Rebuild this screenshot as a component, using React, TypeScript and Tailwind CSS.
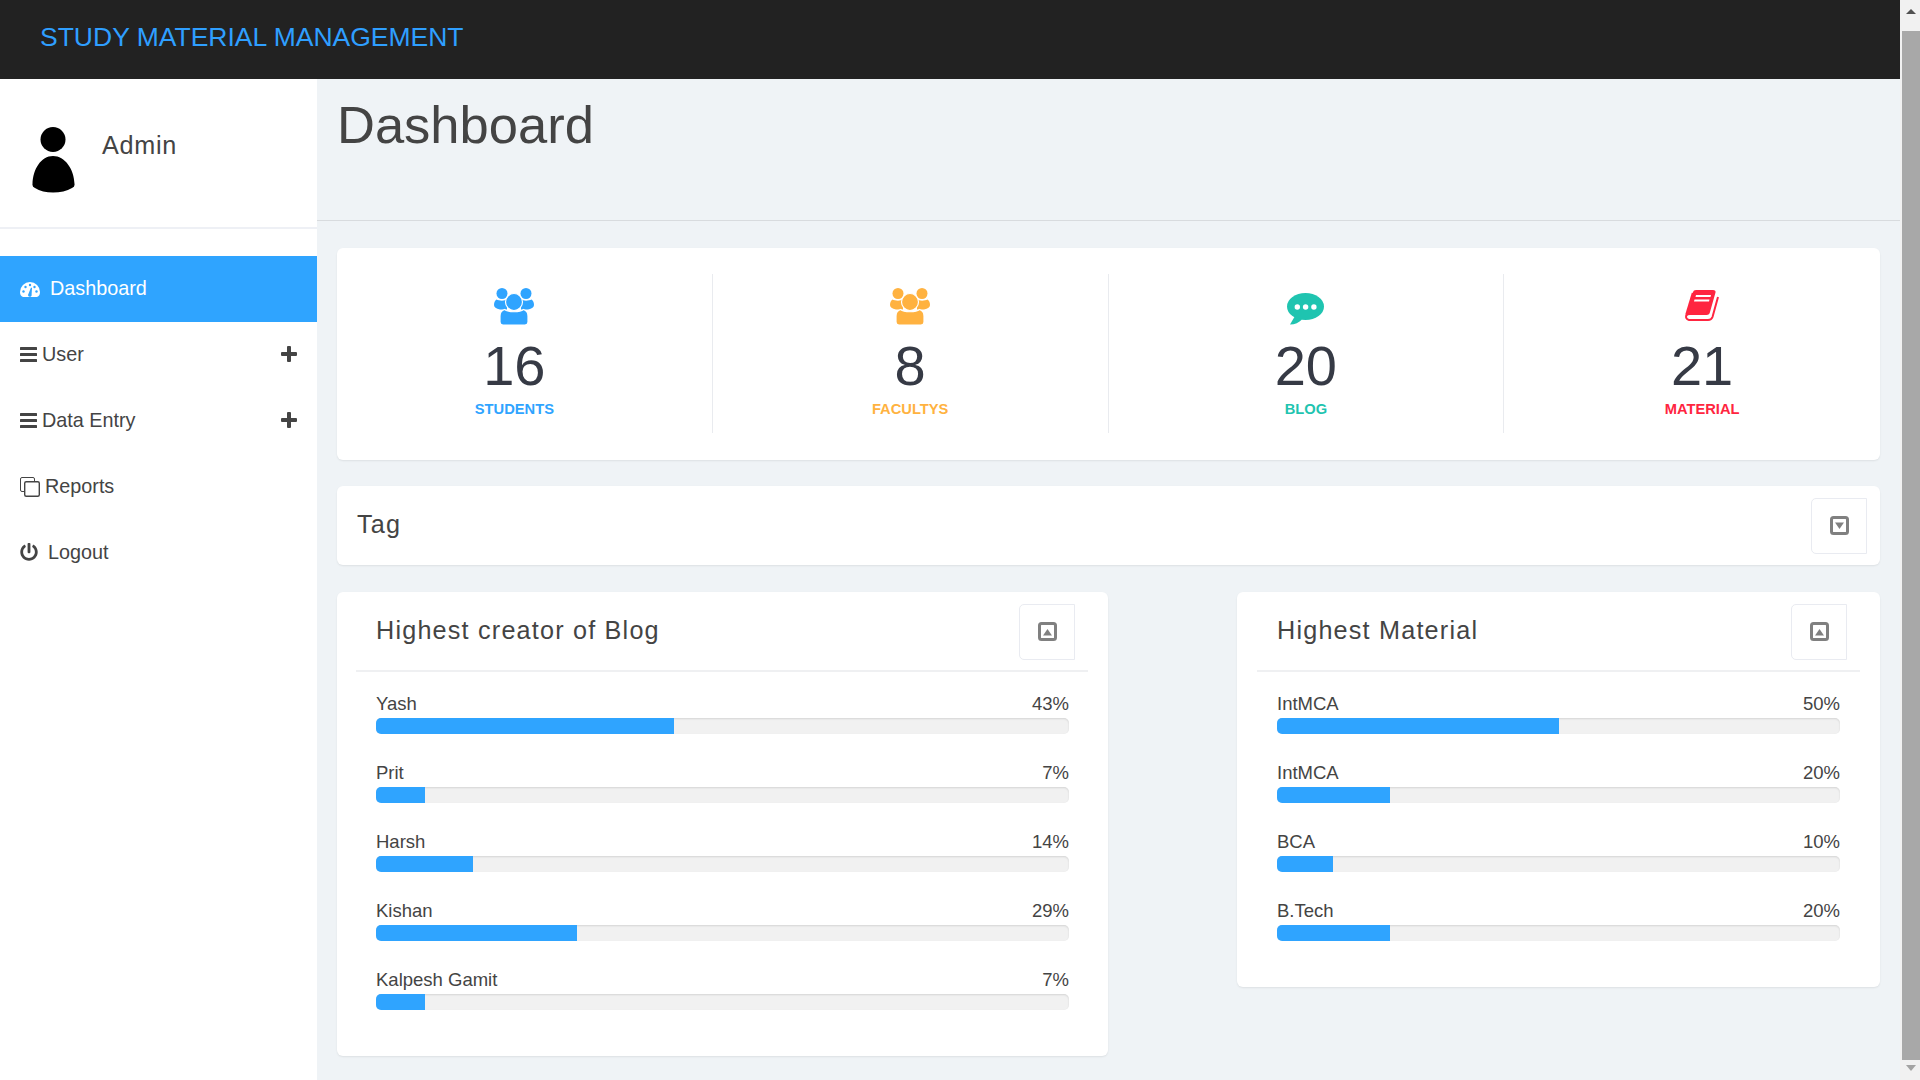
import React from 'react';
import { FaPowerOff } from 'react-icons/fa';

const font = { fontFamily: '"Liberation Sans", Arial, sans-serif' };

const blogRows = [
  { name: 'Yash', value: 43 },
  { name: 'Prit', value: 7 },
  { name: 'Harsh', value: 14 },
  { name: 'Kishan', value: 29 },
  { name: 'Kalpesh Gamit', value: 7 },
];

const materialRows = [
  { name: 'IntMCA', value: 50 },
  { name: 'IntMCA', value: 20 },
  { name: 'BCA', value: 10 },
  { name: 'B.Tech', value: 20 },
];

const PersonIcon = () => (
  <svg width="43" height="66" viewBox="0 0 43 66" className="shrink-0">
    <circle cx="21" cy="12.5" r="12.5" fill="#000" />
    <path d="M21 29C33 29 42 42 42.5 57Q43 60 40 61C30 67 12 67 3 61Q0 60 .5 57C1 42 9 29 21 29Z" fill="#000" />
  </svg>
);

const GaugeIcon = () => (
  <svg width="20" height="15" viewBox="0 0 20 15" className="shrink-0">
    <path d="M3 15Q0 14 0 10A10 10 0 0 1 20 10Q20 14 17 15Z" fill="#fff" />
    <g fill="#2fa4ff">
      <circle cx="3.5" cy="9.5" r="1.2" />
      <circle cx="5.5" cy="5" r="1.2" />
      <circle cx="10" cy="3" r="1.2" />
      <circle cx="14.5" cy="5" r="1.2" />
      <circle cx="16.5" cy="9.5" r="1.2" />
      <path d="M8.4 12L11 5.5L12 6L11.6 12.5A1.8 1.8 0 1 1 8.4 12Z" />
    </g>
  </svg>
);

const BarsIcon = () => (
  <svg width="17" height="15" viewBox="0 0 17 15" className="-mt-[2px] shrink-0">
    <g fill="#444">
      <rect x="0" y="0" width="17" height="3" rx=".5" />
      <rect x="0" y="6" width="17" height="3" rx=".5" />
      <rect x="0" y="12" width="17" height="3" rx=".5" />
    </g>
  </svg>
);

const PlusIcon = () => (
  <svg width="16" height="16" viewBox="0 0 16 16" className="-mt-[3px] shrink-0">
    <path
      d="M6 1Q6 0 7 0H9Q10 0 10 1V6H15Q16 6 16 7V9Q16 10 15 10H10V15Q10 16 9 16H7Q6 16 6 15V10H1Q0 10 0 9V7Q0 6 1 6H6Z"
      fill="#444"
    />
  </svg>
);

const CloneIcon = () => (
  <svg width="20" height="20" viewBox="0 0 20 20" className="shrink-0" fill="none" stroke="#444">
    <path d="M4 14.5H2Q.5 14.5 .5 13V2Q.5 .5 2 .5H13Q14.5 .5 14.5 2V4" strokeWidth="1" />
    <rect x="4.7" y="4.7" width="14.6" height="14.6" rx="1.5" strokeWidth="1.4" />
  </svg>
);

const UsersIcon = ({ color }: { color: string }) => (
  <svg width="40" height="37" viewBox="0 0 40 37">
    <g fill={color}>
      <circle cx="8" cy="5.5" r="5.5" />
      <circle cx="32" cy="5.5" r="5.5" />
      <path d="M2.5 11.5C5 13 11 13 13 11.5V21.5H6Q0 20 0 17Q0 13 2.5 11.5Z" />
      <path d="M37.5 11.5C35 13 29 13 27 11.5V21.5H34Q40 20 40 17Q40 13 37.5 11.5Z" />
      <path
        d="M10.5 21.5C14 24.5 26 24.5 29.5 21.5C32.5 22.5 34 25 34 28V34Q34 37 31 37H9Q6 37 6 34V28C6 25 7.5 22.5 10.5 21.5Z"
        stroke="#fff"
        strokeWidth="1.2"
      />
      <circle cx="20" cy="14" r="8.5" stroke="#fff" strokeWidth="1.2" />
    </g>
  </svg>
);

const BubbleIcon = ({ color }: { color: string }) => (
  <svg width="37" height="32" viewBox="0 0 37 32" className="mt-[6px]">
    <ellipse cx="18.5" cy="13.5" rx="18.5" ry="13.5" fill={color} />
    <path d="M8 23L3 31.5C8 31.5 12 29.5 15 26.5Z" fill={color} />
    <g fill="#fff">
      <circle cx="10.3" cy="14" r="2.7" />
      <circle cx="18.6" cy="14" r="2.7" />
      <circle cx="26.9" cy="14" r="2.7" />
    </g>
  </svg>
);

const BookIcon = ({ color }: { color: string }) => (
  <svg width="34" height="32" viewBox="0 0 34 32">
    <path d="M8 2Q8.5 0 11 0H28Q31 0 30.5 2.5L25 22Q24.5 25 21.5 25H5Q3 25 2 26L1 25Z" fill={color} />
    <path d="M1.5 24.5Q0 29 4 30H23Q26.5 30 27.5 27L33 7" fill="none" stroke={color} strokeWidth="2" />
    <path d="M1.5 24.5L8 3" fill="none" stroke={color} strokeWidth="2.5" />
    <path d="M11 5H26L25.5 7H10.5ZM9.5 9.5H24.5L24 11.5H9Z" fill="#fff" />
  </svg>
);

const ToggleIcon = ({ up }: { up?: boolean }) => (
  <svg width="19" height="19" viewBox="0 0 19 19" className="-mt-[1px]">
    <rect x="1.5" y="1.5" width="16" height="16" rx="2" fill="none" stroke="#808080" strokeWidth="3" />
    <path d={up ? 'M5 13.5H14L9.5 7Z' : 'M5 6.5H14L9.5 13Z'} fill="#808080" />
  </svg>
);

const ToggleButton = ({ up }: { up?: boolean }) => (
  <div className="flex h-[56px] w-[56px] items-center justify-center rounded-l-[5px] border border-[#e9ebf1] bg-white">
    <ToggleIcon up={up} />
  </div>
);

const SideItem = ({
  icon,
  label,
  gap,
  active,
  plus,
}: {
  icon: React.ReactNode;
  label: string;
  gap: string;
  active?: boolean;
  plus?: boolean;
}) => (
  <div
    className={`flex h-[66px] items-center pl-[20px] pr-[20px] text-[19.8px] ${gap} ${
      active ? 'bg-[#2fa4ff] text-white' : 'text-[#444]'
    }`}
  >
    {icon}
    <span className="flex-1">{label}</span>
    {plus && <PlusIcon />}
  </div>
);

const Stat = ({
  icon,
  value,
  label,
  color,
  last,
}: {
  icon: React.ReactNode;
  value: string;
  label: string;
  color: string;
  last?: boolean;
}) => (
  <div className={`flex h-[159px] flex-col items-center pt-[11px] ${last ? '' : 'border-r border-[#e9ebef]'}`}>
    <div className="flex h-[42px] items-center justify-center">{icon}</div>
    <div className="mt-[8px] h-[62px] text-[56px] leading-[62px] text-[#363a45]">{value}</div>
    <div className={`mt-[2px] text-[14.7px] font-bold leading-[20px] ${color}`}>{label}</div>
  </div>
);

const ProgressRow = ({ name, value }: { name: string; value: number }) => (
  <div className="mb-[25px]">
    <div className="flex h-[28px] items-center justify-between text-[18.5px] text-[#444]">
      <span>{name}</span>
      <span>{value}%</span>
    </div>
    <div className="h-[16px] overflow-hidden rounded-[5px] bg-[#f1f1f1] shadow-[inset_0_1px_2px_rgba(0,0,0,0.12)]">
      <div className="h-full bg-[#2fa4ff]" style={{ width: `${value}%` }} />
    </div>
  </div>
);

const ProgressPanel = ({
  title,
  rows,
  outer,
  inner,
}: {
  title: string;
  rows: { name: string; value: number }[];
  outer: string;
  inner: string;
}) => (
  <div className={`rounded-[6px] bg-white pb-[21px] shadow-[0_1px_2px_rgba(0,0,0,0.08)] ${outer}`}>
    <div className="flex h-[80px] items-center justify-between border-b-2 border-[#eff0f2] pl-[20px] pr-[13px]">
      <h2 className="text-[25.2px] tracking-[1.2px] text-[#444]">{title}</h2>
      <div className="mt-[2px]">
        <ToggleButton up />
      </div>
    </div>
    <div className={`pt-[18px] ${inner}`}>
      {rows.map((row, i) => (
        <ProgressRow key={i} name={row.name} value={row.value} />
      ))}
    </div>
  </div>
);

export default function App() {
  return (
    <div className="flex h-screen w-full overflow-hidden bg-[#eff3f6]" style={font}>
      <div className="flex min-w-0 flex-1 flex-col">
        <header className="h-[79px] shrink-0 bg-[#222] pl-[40px] text-[26.5px] leading-[74px] text-[#2f9fff]">
          STUDY MATERIAL MANAGEMENT
        </header>
        <div className="flex min-h-0 flex-1">
          <aside className="w-[317px] shrink-0 bg-white">
            <div className="flex h-[150px] items-start gap-[27px] border-b-2 border-[#eef0f5] pl-[32px] pt-[48px]">
              <PersonIcon />
              <span className="text-[25.2px] leading-[36px] tracking-[0.7px] text-[#444]">Admin</span>
            </div>
            <nav className="mt-[27px]">
              <SideItem icon={<GaugeIcon />} label="Dashboard" gap="gap-[10px]" active />
              <SideItem icon={<BarsIcon />} label="User" gap="gap-[5px]" plus />
              <SideItem icon={<BarsIcon />} label="Data Entry" gap="gap-[5px]" plus />
              <SideItem icon={<CloneIcon />} label="Reports" gap="gap-[5px]" />
              <SideItem
                icon={<FaPowerOff className="-mt-[2px] h-[18px] w-[18px] shrink-0 text-[#444]" />}
                label="Logout"
                gap="gap-[10px]"
              />
            </nav>
          </aside>
          <main className="min-w-0 flex-1">
            <div className="h-[142px] border-b border-[#d8dbde] pl-[20px] pt-[16px]">
              <h1 className="text-[52.5px] leading-[60px] text-[#444]">Dashboard</h1>
            </div>
            <div className="px-[20px] pt-[27px]">
              <div className="rounded-[6px] bg-white pb-[27px] pt-[26px] shadow-[0_1px_2px_rgba(0,0,0,0.08)]">
                <div className="-mx-[20px] grid grid-cols-4">
                  <Stat icon={<UsersIcon color="#2fa4ff" />} value="16" label="STUDENTS" color="text-[#2fa4ff]" />
                  <Stat icon={<UsersIcon color="#ffb240" />} value="8" label="FACULTYS" color="text-[#ffb240]" />
                  <Stat icon={<BubbleIcon color="#1fc4b0" />} value="20" label="BLOG" color="text-[#1fc4b0]" />
                  <Stat icon={<BookIcon color="#ff2540" />} value="21" label="MATERIAL" color="text-[#ff2540]" last />
                </div>
              </div>
              <div className="mt-[26px] flex h-[79px] items-center justify-between rounded-[6px] bg-white pl-[20px] pr-[13px] shadow-[0_1px_2px_rgba(0,0,0,0.08)]">
                <h2 className="-mt-[2px] text-[25.2px] tracking-[1.2px] text-[#444]">Tag</h2>
                <ToggleButton />
              </div>
              <div className="mt-[27px] flex items-start justify-between">
                <div className="w-[771px]">
                  <ProgressPanel
                    title="Highest creator of Blog"
                    rows={blogRows}
                    outer="pl-[19px] pr-[20px]"
                    inner="pl-[20px] pr-[19px]"
                  />
                </div>
                <div className="w-[643px]">
                  <ProgressPanel
                    title="Highest Material"
                    rows={materialRows}
                    outer="px-[20px]"
                    inner="px-[20px]"
                  />
                </div>
              </div>
            </div>
          </main>
        </div>
      </div>
      {/* browser scrollbar */}
      <div className="flex w-[20px] shrink-0 flex-col bg-[#f1f1f1] pl-[2px]">
        <div className="flex h-[31px] shrink-0 items-start justify-center pt-[9px]">
          <div className="h-0 w-0 border-x-[5px] border-b-[5px] border-x-transparent border-b-[#505050]" />
        </div>
        <div className="flex-1 bg-[#a8a8a8]" />
        <div className="flex h-[20px] shrink-0 items-start justify-center pt-[5px]">
          <div className="h-0 w-0 border-x-[5px] border-t-[6px] border-x-transparent border-t-[#a3a3a3]" />
        </div>
      </div>
    </div>
  );
}
